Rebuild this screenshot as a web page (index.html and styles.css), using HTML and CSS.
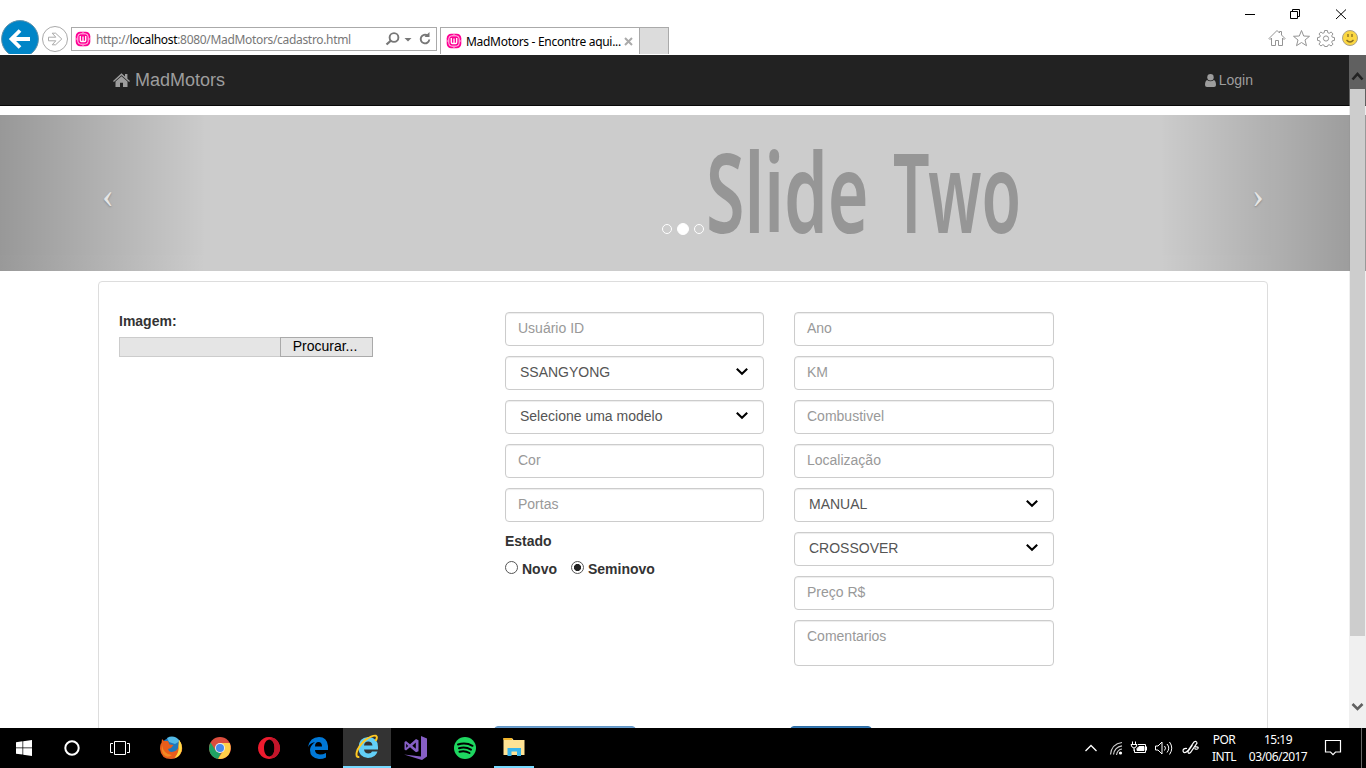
FILE: index.html
```html
<!DOCTYPE html>
<html lang="pt-BR">
<head>
<meta charset="utf-8">
<title>MadMotors - Encontre aqui</title>
<link rel="stylesheet" href="styles.css">
</head>
<body>
<svg class="defs" width="0" height="0">
  <symbol id="wamp" viewBox="0 0 16 16">
    <rect x=".7" y=".7" width="14.6" height="14.6" rx="4.5" fill="#ff0095"/>
    <path d="M0 8h2.500M13.500 8h2.500M8 0v2M8 14v2" stroke="#ffb0dc" stroke-width="1"/>
    <rect x="2.800" y="2.800" width="10.400" height="10.400" rx="3" fill="#ff0095" stroke="#ffd0ea" stroke-width="1"/>
    <path d="M5.300 5v4.300q0 1.200 1.200 1.200h3q1.200 0 1.200-1.200V5M8 5.500v4.500" fill="none" stroke="#fff" stroke-width="1.300"/>
  </symbol>
  <symbol id="down" viewBox="0 0 12 8"><path d="M.8.800L6 5.800 11.200.800" fill="none" stroke="#000" stroke-width="2.100"/></symbol>
</svg>

<header class="chrome">
  <svg class="back" width="40" height="34" viewBox="0 20 40 34"><circle cx="20" cy="39" r="18.400" fill="#0085c7" stroke="#5f91aa" stroke-width="1"/><path d="M30 39H12M20 30.500l-8.500 8.500 8.500 8.500" fill="none" stroke="#fff" stroke-width="3.800"/></svg>
  <svg class="forward" width="30" height="34" viewBox="40 20 30 34"><circle cx="55" cy="39" r="12.500" fill="#fff" stroke="#aaa"/><path d="M48.500 37.200h7.300l-3.600-4h3.400l6.200 5.800-6.200 5.800h-3.400l3.600-4h-7.300z" fill="#fff" stroke="#aaa"/></svg>
  <div class="address">
    <svg width="16" height="16"><use href="#wamp"/></svg>
    <span class="url">http://<b>localhost</b>:8080/MadMotors/cadastro.html</span>
    <svg class="address-tools" width="48" height="18" viewBox="382 30.500 48 18" fill="none" stroke="#777"><circle cx="394" cy="38" r="4.400" stroke-width="1.900"/><path d="M391 41l-4.500 4" stroke-width="2.300"/><path d="M404.500 38.500h7l-3.500 3.500z" fill="#777" stroke="none"/><path d="M427.500 36a4.300 4.300 0 1 0 1.800 4" stroke-width="1.900"/><path d="M424.500 37.500h5V32.500z" fill="#777" stroke="none"/></svg>
  </div>
  <div class="tab">
    <svg width="16" height="16"><use href="#wamp"/></svg>
    <span class="tab-title">MadMotors - Encontre aqui...</span>
    <svg class="tab-close" width="9" height="9" viewBox="0 0 9 9"><path d="M1 1l7 7M8 1L1 8" stroke="#aaa" stroke-width="2"/></svg>
  </div>
  <div class="new-tab"></div>
  <div class="window-side">
    <svg width="116" height="28" viewBox="1250 0 116 28" fill="none" stroke="#000"><path d="M1245 14.500h10"/><path d="M1290.500 11.500h7v7h-7zM1292.500 11.500v-2h7v7h-2"/><path d="M1336 9.500l10 9.500M1346 9.500l-10 9.500"/></svg>
    <svg width="106" height="24" viewBox="1260 28 106 24" fill="none" stroke="#949494"><path d="M1269 38.500l8-8 2.500 2.500v-1.500h2v3.500l3.500 3.500-1 1-1.500-1.500v7.500h-4v-5h-3v5h-4V38l-1.500 1.500z"/><path d="M1301.500 30.500l2.200 5.500 5.800.3-4.500 3.700 1.500 5.700-5-3.200-5 3.200 1.500-5.700-4.500-3.700 5.800-.3z"/><path d="M1324.600 30.500h2.800l.4 2.200 1.400.6 1.900-1.300 1.900 1.900-1.300 1.900.6 1.400 2.200.4v2.800l-2.200.4-.6 1.400 1.300 1.900-1.900 1.900-1.900-1.300-1.400.6-.4 1.200h-2.800l-.4-1.200-1.400-.6-1.900 1.300-1.900-1.900 1.300-1.900-.6-1.400-2.200-.4v-2.800l2.200-.4.6-1.400-1.300-1.900 1.900-1.900 1.900 1.300 1.400-.6z"/><circle cx="1326" cy="38.500" r="2.600"/><circle cx="1350" cy="38" r="7.500" fill="#fbd742" stroke="#aaa08a"/><path d="M1348 34v3M1352 34v3M1346.500 40q3.500 4 7 0" stroke="#866c20" stroke-width="1.300"/></svg>
  </div>
</header>

<main class="page">
  <nav class="navbar">
    <a class="brand"><svg width="17" height="14" viewBox="0 0 17 14" fill="#9d9d9d"><path d="M8.500.300L12 3.500V1h2.400v4.700L17 8l-.9 1L8.500 2.300.9 9 0 8z"/><path d="M8.500 3.200l6 5.200V14H10V9.800H7V14H2.500V8.400z"/></svg><span>MadMotors</span></a>
    <a class="login"><svg width="11" height="13" viewBox="0 0 11 13" fill="#9d9d9d"><circle cx="5.500" cy="3.300" r="3.200"/><path d="M2 6q3.500 2.400 7 0 2 1 2 5 0 2-2 2H2q-2 0-2-2 0-4 2-5z"/></svg><span>Login</span></a>
  </nav>
  <section class="carousel">
    <svg class="slide" width="1366" height="156" viewBox="0 115 1366 156"><text class="slide-word" transform="translate(706 233) scale(.63 1)">Slide</text><text class="slide-word" transform="translate(893 233) scale(.578 1)">Two</text></svg>
    <div class="shade shade-left"><span class="arrow">‹</span></div>
    <div class="shade shade-right"><span class="arrow">›</span></div>
    <div class="dots"><i></i><i class="current"></i><i></i></div>
  </section>
  <form class="panel">
    <div class="image-column">
      <label>Imagem:</label>
      <div class="file"><span class="file-name"></span><button type="button">Procurar...</button></div>
    </div>
    <div class="column">
      <div class="field">Usuário ID</div>
      <div class="field select">SSANGYONG<svg width="12" height="8"><use href="#down"/></svg></div>
      <div class="field select">Selecione uma modelo<svg width="12" height="8"><use href="#down"/></svg></div>
      <div class="field">Cor</div>
      <div class="field">Portas</div>
      <label class="state">Estado</label>
      <div class="radios"><i class="radio"></i><label>Novo</label><i class="radio checked"></i><label>Seminovo</label></div>
    </div>
    <div class="column">
      <div class="field">Ano</div>
      <div class="field">KM</div>
      <div class="field">Combustivel</div>
      <div class="field">Localização</div>
      <div class="field select">MANUAL<svg width="12" height="8"><use href="#down"/></svg></div>
      <div class="field select">CROSSOVER<svg width="12" height="8"><use href="#down"/></svg></div>
      <div class="field">Preço R$</div>
      <div class="field area">Comentarios</div>
    </div>
    <div class="actions"><span class="button light"></span><span class="button dark"></span></div>
  </form>
  <div class="scrollbar">
    <svg width="17" height="34" viewBox="0 0 17 34"><path d="M3.500 24.500l5-5.500 5 5.500" fill="none" stroke="#222" stroke-width="2.600"/></svg>
    <div class="thumb"></div>
    <svg width="17" height="93" viewBox="0 0 17 93"><path d="M3.500 68l5 5 5-5" fill="none" stroke="#606060" stroke-width="2.600"/></svg>
  </div>
</main>

<footer class="taskbar">
  <div class="launchers">
    <span class="app"><svg width="16" height="16" viewBox="0 0 16 16" fill="#fff"><path d="M0 2.200l6.500-.9v6.200H0zM7.200 1.200L16 0v7.500H7.200zM0 8.300h6.500v6.300L0 13.700zM7.200 8.300H16V16l-8.800-1.200z"/></svg></span>
    <span class="app"><svg width="16" height="16"><circle cx="8" cy="8" r="6.700" fill="none" stroke="#fff" stroke-width="2"/></svg></span>
    <span class="app"><svg width="20" height="14" viewBox="0 0 20 14" fill="none" stroke="#fff"><path d="M4.500.500h11v13h-11zM3 2.500H.5v9H3M17 2.500h2.500v9H17"/></svg></span>
  </div>
  <div class="apps">
    <span class="app"><svg width="24" height="24" viewBox="0 0 24 24"><circle cx="12.500" cy="12" r="10.500" fill="#1f78bc"/><path d="M8 2q7-4 13 3l-5 3-6-2z" fill="#52b9e6"/><path d="M3 3l2 2 4 0 1.500 3.500 4 .500-2.500 3-3 1q1 4 6 2.500 4-1 4.500-6L20 4q4 5 3 11-3 8-11 8Q2 23 1 13 1 8 2.500 7z" fill="#e95d1c"/><path d="M20 4q4 5 2.500 11-2 6-7 7 5-6 4-12z" fill="#ffdc45"/><path d="M3 9q1 9 10 10-5 4-9-1-2-4-1-9z" fill="#f28a22"/></svg></span>
    <span class="app"><svg width="24" height="24" viewBox="0 0 24 24"><circle cx="12" cy="12" r="11" fill="#dc4d3e"/><path d="M2.500 6.500L8 15l5 2-3 6Q2 21 1 13q0-4 1.500-6.500z" fill="#20a363"/><path d="M12 7h9.700Q24 13 20.500 19 16 23.500 10 22.800L16.500 13z" fill="#ffcf48"/><circle cx="12" cy="12" r="5" fill="#eee"/><circle cx="12" cy="12" r="4" fill="#4688ed"/></svg></span>
    <span class="app"><svg width="24" height="24" viewBox="0 0 24 24"><path fill-rule="evenodd" d="M12 1a11 11 0 1 0 .01 0zM12.500 3.500c3 0 5 3.500 5 8.500s-2 8.500-5 8.500-5.500-3.500-5.500-8.500 2.500-8.500 5.500-8.500z" fill="#ed1b2e"/><path d="M12.500 3.500Q17 0 20.500 5q5 8 0 14-4 5-8 1.500 5-1 5-8.500t-5-8.500z" fill="#c2152a"/></svg></span>
    <span class="app"><svg width="24" height="24" viewBox="0 0 24 24"><path d="M2 11Q4 1 13 1q8 0 9 9v4H9q0 4 5 4.500 3 0 6-1.500v4.500q-3 1.500-7 1.500-9-1-9-9Q4 10 9 6 4 7 2 11zM9 10.500h7Q16 6 12.500 6T9 10.500z" fill="#0078d7" fill-rule="evenodd"/></svg></span>
    <span class="app active"><svg width="26" height="26" viewBox="0 0 26 26"><path d="M4.500 14q0-10.500 9.500-11 10 .500 10 10v2.500H10q.500 4 4.500 4 3 0 3.500-2h5.500q-2 6.500-9.500 6.500-9.500-1-9.500-10zm5.500-2.500h8.500Q18 7.500 14.200 7.500T10 11.500z" fill="#62cff7" fill-rule="evenodd"/><path d="M21.500 7q2.500-4 .500-5.200-3-1-10.500 4Q4.500 12 2.800 18q-1.500 5.500 2.500 5" fill="none" stroke="#ffc923" stroke-width="2"/></svg></span>
    <span class="app"><svg width="26" height="26" viewBox="0 0 26 26" fill="#865fc5"><path d="M18 1l6 2.500v18L19 25 1 19.500l17 2z"/><path fill-rule="evenodd" d="M1.500 7L3 6l4 3.200L13 4l2.500 1.200v11L13 17.300l-6-5-4 3.200-1.500-1zM3.200 8.800v4L5.200 11zM12.800 7.500L9.300 10.700l3.500 3z"/></svg></span>
    <span class="app"><svg width="24" height="24" viewBox="0 0 24 24"><circle cx="12" cy="12" r="11" fill="#1ed760"/><path d="M5 8.500q8-2.300 14.500 1.300M6 12.200q6.500-1.800 12 1.400M6.500 15.800q5.500-1.400 10 1.200" fill="none" stroke="#000" stroke-width="2" stroke-linecap="round"/></svg></span>
    <span class="app running"><svg width="22" height="20" viewBox="0 0 22 20"><path d="M.5 1h8.500l1.500 2h11v15H.5z" fill="#ffe395"/><path d="M.5 1H9v2H.5z" fill="#f3b62c"/><path d="M4.500 19v-8h13.500v8h-4v-4.500H8.500V19z" fill="#38b5ed"/></svg></span>
  </div>
  <div class="tray">
    <svg width="122" height="24" viewBox="1080 736 122 24" fill="none" stroke="#fff"><path d="M1085.500 751l5.500-5.500 5.500 5.500" stroke-width="1.300"/><g stroke="#ccc" stroke-width="1.200"><path d="M1110.500 754.500q1-10.500 11.500-12M1113.500 754.500q1-7.500 8.500-8.700M1116.500 755q1-5.500 5.500-6"/></g><circle cx="1120.500" cy="753" r="1.600" fill="#fff" stroke="none"/><path d="M1138 744.500h7.500v8h-11v-3M1146.500 746.500v4"/><path d="M1139 746.500h5v4h-7v-2z" fill="#fff"/><path d="M1132.500 741.500v3M1135.500 741.500v3M1131 744.500h6l-1 2.500-2 1-2-1zM1134 748v3"/><path d="M1155.500 746h2.500l4-4v12l-4-4h-2.500zM1164.500 746q2 2 0 4.500M1167 744q3.500 4 0 8.500M1169.500 742q4.500 6 0 12.500"/><path d="M1187 748.500q-4-.5-4 2.500 1 3.500 5-.5l6-8.500q2.500-1.500 3 1l-6.500 9.500q-2.500 2-2.500-1l4.500-6.500M1195 747q4-.5 3 1.500-1 1.500-3.500 0" stroke-width="1.200"/></svg>
    <div class="lang"><span>POR</span><span>INTL</span></div>
    <div class="clock"><span>15:19</span><span>03/06/2017</span></div>
    <svg class="notes" width="16" height="16" viewBox="0 0 16 16"><path d="M.5.500h15v11.500h-5L8 14.700 5.500 12h-5z" fill="none" stroke="#fff" stroke-width="1.200"/></svg>
  </div>
</footer>
</body>
</html>
```
FILE: styles.css
```css
* { box-sizing: border-box; }
body { margin: 0; width: 1366px; height: 768px; overflow: hidden; background: #fff; color: #333; font: 14px/20px "Liberation Sans", Arial, sans-serif; }
svg { display: block; flex: none; overflow: visible; }
.defs { position: absolute; }

.chrome { height: 55px; padding-top: 20px; display: flex; align-items: flex-start; font: 12px/16px "Noto Sans", sans-serif; }
.chrome .back, .chrome .forward { overflow: hidden; }
.address { margin: 7px 0 0 1px; width: 366px; height: 24px; border: 1px solid #aaa; display: flex; align-items: center; padding-left: 3px; }
.url { margin: 1px 0 0 5px; width: 286px; white-space: nowrap; color: #777; letter-spacing: -.32px; }
.url b { font-weight: 400; color: #000; }
.tab { margin: 7px 0 0 3px; width: 200px; height: 27px; border: 1px solid #aaa; border-bottom: 0; display: flex; align-items: center; padding-left: 5px; }
.tab-title { margin: 1px 0 0 4px; width: 156px; white-space: nowrap; color: #000; letter-spacing: -.3px; }
.tab-close { margin-left: 2px; }
.new-tab { margin-top: 7px; width: 29px; height: 27px; border: 1px solid #aaa; border-width: 1px 1px 0 0; background: #dcdcdc; }
.window-side { margin: -20px 0 0 auto; display: flex; flex-direction: column; align-items: flex-end; }

.page { position: relative; height: 673px; overflow: hidden; }
.navbar { height: 51px; background: #222; border-bottom: 1px solid #080808; color: #9d9d9d; display: flex; justify-content: space-between; align-items: center; padding: 0 113px; }
.brand, .login { display: flex; align-items: center; }
.brand { font-size: 18px; gap: 5px; }
.login { gap: 3px; }
.carousel { position: relative; height: 156px; margin-top: 9px; background: #ccc; }
.slide-word { font: 600 111px "Noto Sans", sans-serif; fill: #969696; }
.shade { position: absolute; top: 0; height: 156px; width: 205px; opacity: .5; color: #fff; }
.shade-left { left: 0; background: linear-gradient(90deg, rgba(0,0,0,.5), rgba(0,0,0,.0001)); }
.shade-right { right: 0; background: linear-gradient(90deg, rgba(0,0,0,.0001), rgba(0,0,0,.5)); }
.arrow { position: absolute; top: 66px; font: 35px/30px "Liberation Serif", serif; text-shadow: 0 1px 2px rgba(0,0,0,.6); }
.shade-left .arrow { left: 102px; }
.shade-right .arrow { right: 102px; }
.dots { position: absolute; left: 662px; top: 108px; display: flex; align-items: center; gap: 5px; }
.dots i { width: 10px; height: 10px; border: 1px solid #fff; border-radius: 50%; }
.dots .current { width: 12px; height: 12px; background: #fff; }

.panel { margin: 10px 98px 0; height: 500px; border: 1px solid #ddd; border-radius: 4px; padding: 30px 20px; display: grid; grid-template-columns: 356px 259px 260px; column-gap: 30px; grid-template-rows: 414px auto; }
.image-column label, .state, .radios label { font-weight: 700; }
.image-column label { display: block; height: 25px; line-height: 19px; }
.file { display: flex; height: 20px; width: 254px; }
.file-name { flex: 1; border: 1px solid #ccc; border-right: 0; background: #e5e5e5; }
.file button { width: 93px; border: 1px solid #aaa; background: #e5e5e5; padding: 0 3px 1px 0; color: #000; font: 14px/17px "Liberation Sans", Arial, sans-serif; }
.column { display: flex; flex-direction: column; gap: 10px; }
.field { height: 34px; border: 1px solid #ccc; border-radius: 4px; padding: 5px 12px; color: #999; box-shadow: inset 0 1px 1px rgba(0,0,0,.075); }
.select { display: flex; justify-content: space-between; padding: 5px 15px 5px 14px; color: #555; }
.select svg { margin-top: 6px; }
.area { height: 46px; }
.state { height: 20px; margin-top: -1px; }
.radios { display: flex; align-items: center; height: 20px; margin-top: -2px; }
.radio { width: 13px; height: 13px; border: 1px solid #555; border-radius: 50%; margin: -3px 4px 0 0; }
.radios label + .radio { margin-left: 14px; }
.checked { background: radial-gradient(circle, #222 0 3.2px, #fff 3.9px); }
.actions { grid-column: 1 / -1; display: flex; padding-left: 375px; gap: 154px; }
.button { height: 34px; border-radius: 4px; }
.light { width: 142px; background: #6b9fcf; border: 1px solid #6296c5; }
.dark { width: 82px; background: #337ab7; border: 1px solid #2e6da4; }

.scrollbar { position: absolute; top: 0; right: 0; width: 17px; height: 673px; background: linear-gradient(#606060 0 50px, #505050 50px 51px, #ececec 51px 60px, #999 60px 216px, #f0f0f0 216px); }
.thumb { height: 547px; margin: 0 1px; background: #cdcdcd; }

.taskbar { height: 40px; background: #000; display: flex; color: #fff; }
.launchers, .apps { display: flex; }
.apps { margin-left: 3px; gap: 1px; }
.app { width: 48px; height: 40px; display: flex; align-items: center; justify-content: center; }
.active { background: #333; border-bottom: 2px solid #76d9ff; }
.running { width: 40px; margin-left: 4px; border-bottom: 2px solid #76d9ff; }
.tray { margin-left: auto; display: flex; align-items: center; width: 286px; font: 12px/17px "Noto Sans", sans-serif; letter-spacing: -.55px; }
.lang, .clock { display: flex; flex-direction: column; align-items: center; white-space: nowrap; }
.lang { width: 26px; margin-left: 9px; }
.clock { width: 60px; margin-left: 11px; }
.notes { margin-left: 17px; }
.tray::after { content: ""; width: 1px; height: 40px; margin-left: 20px; background: #666; }
```
